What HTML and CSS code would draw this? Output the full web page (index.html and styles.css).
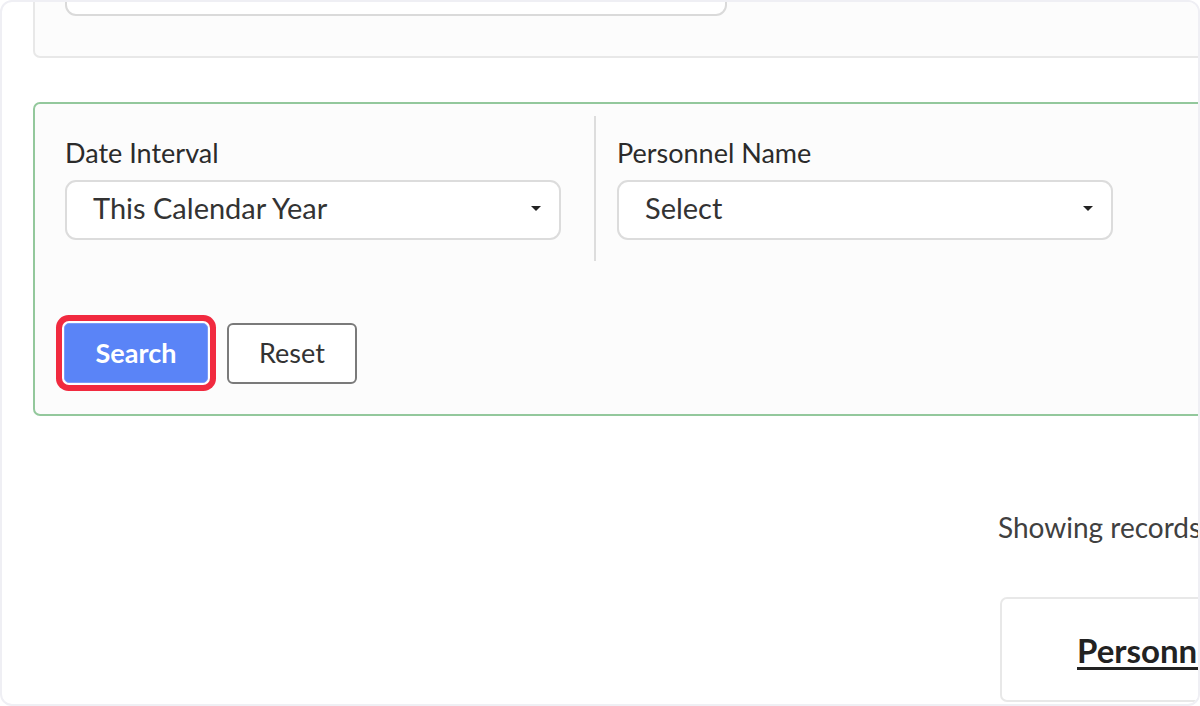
FILE: index.html
```html
<!DOCTYPE html>
<html lang="en">
<head>
<meta charset="utf-8">
<title>Personnel Report</title>
<link rel="stylesheet" href="styles.css">
</head>
<body>
<div class="frame">
  <div class="card card-top">
    <div class="top-input"></div>
  </div>

  <form class="card card-filter">
    <div class="filters">
      <div class="field field-first">
        <label class="field-label">Date Interval</label>
        <div class="select">
          <span class="select-value">This Calendar Year</span>
          <span class="caret"></span>
        </div>
      </div>
      <div class="field">
        <label class="field-label">Personnel Name</label>
        <div class="select">
          <span class="select-value">Select</span>
          <span class="caret"></span>
        </div>
      </div>
    </div>
    <div class="actions">
      <button type="button" class="btn btn-primary">Search</button>
      <button type="button" class="btn btn-outline">Reset</button>
    </div>
  </form>

  <div class="records">Showing records 1 - 10 of 25</div>

  <div class="card card-result">
    <div class="result-title">Personnel Name</div>
  </div>
</div>
</body>
</html>
```

FILE: styles.css
```css
html, body {
  margin: 0;
  padding: 0;
  background: #ffffff;
}

body {
  font-family: Lato, "Open Sans", "Liberation Sans", sans-serif;
  color: #333333;
}

.frame {
  width: 1200px;
  height: 706px;
  box-sizing: border-box;
  border: 2px solid #efeff4;
  border-radius: 12px;
  overflow: hidden;
  background: #ffffff;
  padding-left: 31px;
}

.card {
  box-sizing: border-box;
  width: 1300px;
  border-radius: 7px;
  background: #fcfcfc;
}

/* search box card, scrolled mostly out of view */
.card-top {
  height: 120px;
  margin-top: -64px;
  border: 2px solid #e8e8e8;
  padding: 18px 0 0 30px;
}

.top-input {
  width: 662px;
  height: 58px;
  box-sizing: border-box;
  border: 2px solid #dadada;
  border-radius: 11px;
  background: #ffffff;
}

/* filter form */
.card-filter {
  margin: 44px 0 0 0;
  border: 2px solid #93c89c;
  padding: 12px 0 30px 30px;
}

.filters {
  display: flex;
}

.field {
  width: 496px;
  padding: 21px 0 21px 0;
}

.field-first {
  padding-right: 33px;
  border-right: 2px solid #dddddd;
  margin-right: 21px;
}

.field-label {
  display: block;
  font-size: 27px;
  line-height: 1.2;
  color: #2b2b2b;
  margin-bottom: 11px;
}

.select {
  position: relative;
  box-sizing: border-box;
  height: 60px;
  border: 2px solid #dcdcdc;
  border-radius: 11px;
  background: #ffffff;
  display: flex;
  align-items: center;
  padding: 0 0 4px 26px;
}

.select-value {
  font-size: 29px;
  line-height: 1.2;
  color: #333333;
}

.caret {
  position: absolute;
  right: 18px;
  top: 24px;
  width: 0;
  height: 0;
  border-left: 5px solid transparent;
  border-right: 5px solid transparent;
  border-top: 5px solid #222222;
}

.actions {
  display: flex;
  align-items: flex-start;
  margin-top: 62px;
}

.btn {
  box-sizing: border-box;
  font-family: Lato, "Open Sans", "Liberation Sans", sans-serif;
  font-size: 27px;
  cursor: pointer;
  padding: 0 0 2px 0;
}

.btn-primary {
  width: 144px;
  height: 60px;
  margin-left: -1px;
  background: #5a84f7;
  border: 1px solid #7b9cf8;
  border-radius: 5px;
  color: #ffffff;
  font-weight: 700;
  box-shadow: 0 0 0 2px #ffffff, 0 0 0 8px #f12a3f;
}

.btn-outline {
  width: 130px;
  height: 61px;
  margin-left: 19px;
  background: #ffffff;
  border: 2px solid #7a7a7a;
  border-radius: 6px;
  color: #333333;
}

.records {
  margin: 95px 0 0 965px;
  font-size: 28px;
  line-height: 1.2;
  color: #404040;
  white-space: nowrap;
}

.card-result {
  margin: 52px 0 0 967px;
  height: 105px;
  border: 2px solid #e8e8e8;
  background: #ffffff;
  padding: 32px 0 0 75px;
}

.result-title {
  font-size: 33px;
  line-height: 1.2;
  font-weight: 700;
  color: #222222;
  text-decoration: underline;
  text-underline-offset: 4px;
  white-space: nowrap;
}
```
